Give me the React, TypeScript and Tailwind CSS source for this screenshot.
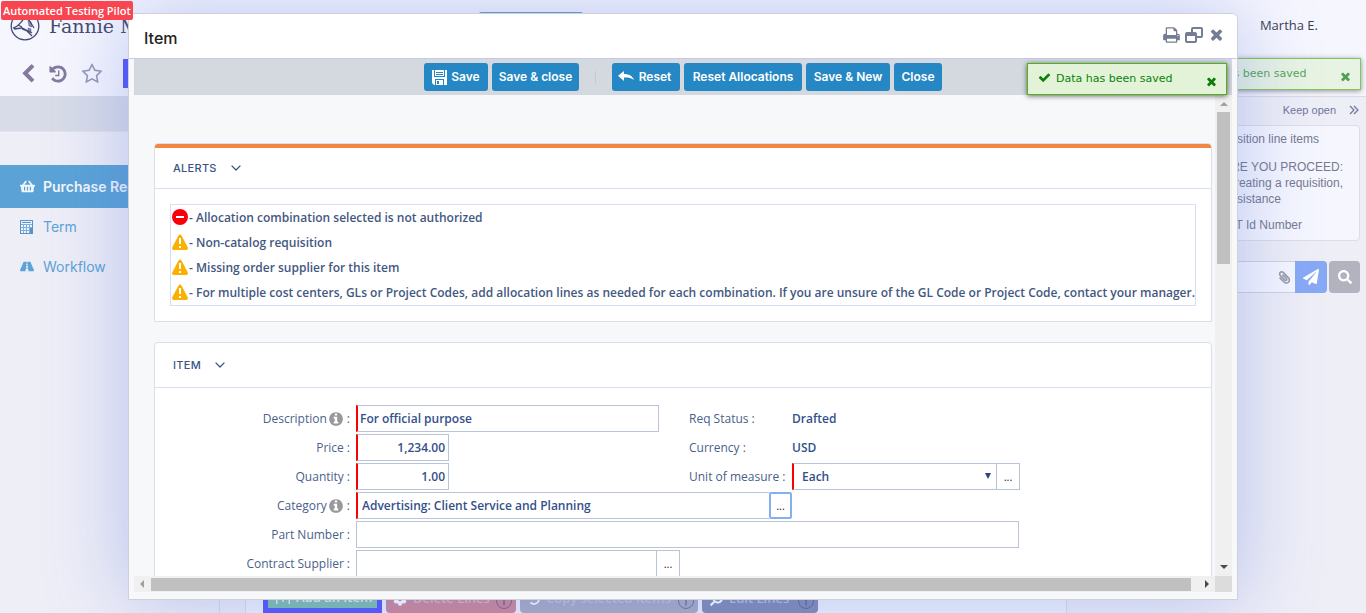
import React from "react";
import { FaPaperPlane, FaPaperclip, FaShoppingBasket, FaRoad, FaCog, FaSearch, FaUndo } from "react-icons/fa";

const PATHS = {
  print:
    "M384 1536h896v-256h-896v256zM384 896h896v-384h-160q-40 0-68-28t-28-68v-160h-640v640zM1536 960q0-26-19-45t-45-19-45 19-19 45 19 45 45 19 45-19 19-45zM1664 960v416q0 13-9.5 22.5t-22.5 9.5h-224v160q0 40-28 68t-68 28h-960q-40 0-68-28t-28-68v-160h-224q-13 0-22.5-9.5t-9.5-22.5v-416q0-79 56.5-135.5t135.5-56.5h64v-544q0-40 28-68t68-28h672q40 0 88 20t76 48l152 152q28 28 48 76t20 88v256h64q79 0 135.5 56.5t56.5 135.5z",
  times:
    "M1490 1322q0 40-28 68l-136 136q-28 28-68 28t-68-28l-294-294-294 294q-28 28-68 28t-68-28l-136-136q-28-28-28-68t28-68l294-294-294-294q-28-28-28-68t28-68l136-136q28-28 68-28t68 28l294 294 294-294q28-28 68-28t68 28l136 136q28 28 28 68t-28 68l-294 294 294 294q28 28 28 68z",
  check:
    "M1671 566q0 40-28 68l-724 724-136 136q-28 28-68 28t-68-28l-136-136-362-362q-28-28-28-68t28-68l136-136q28-28 68-28t68 28l294 295 656-657q28-28 68-28t68 28l136 136q28 28 28 68z",
  back:
    "M1427 301l-531 531 531 531q19 19 19 45t-19 45l-166 166q-19 19-45 19t-45-19l-742-742q-19-19-19-45t19-45l742-742q19-19 45-19t45 19l166 166q19 19 19 45t-19 45z",
  history:
    "M1664 896q0 156-61 298t-164 245-245 164-298 61q-172 0-327-72.5t-264-204.5q-7-10-6.5-22.5t8.5-20.5l137-138q10-9 25-9 16 2 23 12 73 95 179 147t225 52q104 0 198.5-40.5t163.5-109.5 109.5-163.5 40.5-198.5-40.5-198.5-109.5-163.5-163.5-109.5-198.5-40.5q-98 0-188 35.5t-160 101.5l137 138q31 30 14 69-17 40-59 40h-448q-26 0-45-19t-19-45v-448q0-42 40-59 39-17 69 14l130 129q107-101 244.5-156.5t284.5-55.5q156 0 298 61t245 164 164 245 61 298zm-640-288v448q0 14-9 23t-23 9h-320q-14 0-23-9t-9-23v-64q0-14 9-23t23-9h224v-352q0-14 9-23t23-9h64q14 0 23 9t9 23z",
  star:
    "M1201 1004l306-297-422-62-189-382-189 382-422 62 306 297-73 421 378-199 377 199zm527-357q0 22-26 48l-363 354 86 500q1 7 1 20 0 50-41 50-19 0-40-12l-449-236-449 236q-22 12-40 12-21 0-31.5-14.5t-10.5-35.5q0-6 2-20l86-500-364-354q-25-27-25-48 0-37 56-46l502-73 225-455q19-41 49-41t49 41l225 455 502 73q56 9 56 46z",
  info:
    "M1152 1376v-160q0-14-9-23t-23-9h-96v-512q0-14-9-23t-23-9h-320q-14 0-23 9t-9 23v160q0 14 9 23t23 9h96v320h-96q-14 0-23 9t-9 23v160q0 14 9 23t23 9h448q14 0 23-9t9-23zm-128-896v-160q0-14-9-23t-23-9h-192q-14 0-23 9t-9 23v160q0 14 9 23t23 9h192q14 0 23-9t9-23zm640 416q0 209-103 385.5t-279.5 279.5-385.5 103-385.5-103-279.5-279.5-103-385.5 103-385.5 279.5-279.5 385.5-103 385.5 103 279.5 279.5 103 385.5z",
};

function Glyph({ name, className }: { name: keyof typeof PATHS; className: string }) {
  return (
    <svg viewBox="0 0 1792 1792" className={className} fill="currentColor" aria-hidden="true">
      <path d={PATHS[name]} />
    </svg>
  );
}

function Restore() {
  return (
    <svg viewBox="0 0 18 16" className="h-4 w-[18px]" fill="none" stroke="currentColor" strokeWidth="2" aria-hidden="true">
      <path d="M7 5V2q0-1 1-1h8q1 0 1 1v7q0 1-1 1h-4" />
      <rect x="1" y="6" width="10" height="9" rx="1" />
      <path d="M1 7.500h10" strokeWidth="3" />
    </svg>
  );
}

function Floppy() {
  return (
    <svg viewBox="0 0 15 15" className="h-[15px] w-[15px]" aria-hidden="true">
      <path d="M0 0h15v15H2l-2-2z" fill="#fff" />
      <path d="M2 0h1v6h9V0h1v7H2zM4 2h7v1H4zM4 4h7v1H4zM3 9h9v6h-1v-5H4v5H3zM5 11h2v3H5z" fill="#2587c3" />
    </svg>
  );
}

function ReplyArrow() {
  return (
    <svg viewBox="0 0 16 12" className="h-3 w-4" fill="#fff" aria-hidden="true">
      <path d="M6 0v3c5 0 8.500 2 10 6-3-2.200-5.500-2.700-10-2.600V10L0 4.800z" />
    </svg>
  );
}

function Calculator() {
  return (
    <svg viewBox="0 0 13 14" className="h-[14px] w-[13px]" aria-hidden="true">
      <rect x="0.500" y="0.500" width="12" height="13" fill="#eef2fb" stroke="#5b93c8" />
      <path d="M1 4.500h11M1 7.500h11M1 10.500h11M3.500 4v9M6.500 4v9M9.500 4v9" stroke="#7fb0dc" />
      <path d="M2 2h9v1H2zM10 8h2v5h-2z" fill="#5b93c8" />
    </svg>
  );
}

function Logo() {
  return (
    <svg viewBox="0 0 30 30" className="h-[30px] w-[30px]" fill="none" stroke="#454b76" strokeWidth="1.300" aria-hidden="true">
      <circle cx="15" cy="15" r="13.800" />
      <path d="M3 17c5-1 7-5 10-8M4 18l8-1 10 5M12 16l-4-2M12 18l5 2 5 5M19 9l5 8" />
      <path d="M18 9l3 2 1 5-3-1zM18 17l3 1v3l-3-1z" fill="#454b76" fillOpacity="0.600" strokeWidth="0.500" />
    </svg>
  );
}

function Caret() {
  return (
    <svg viewBox="0 0 10 6" className="h-[6px] w-[10px]" fill="none" stroke="#3b5485" strokeWidth="1.300" aria-hidden="true">
      <path d="M0.600 0.600L5 5l4.400-4.400" />
    </svg>
  );
}

function Arrow({ dir, className }: { dir: "up" | "down" | "left" | "right"; className: string }) {
  const d = { up: "M0 6l4-4 4 4z", down: "M0 2l4 4 4-4z", left: "M6 0L2 4l4 4z", right: "M2 0l4 4-4 4z" }[dir];
  return (
    <svg viewBox="0 0 8 8" className={`h-2 w-2 ${className}`} fill="currentColor" aria-hidden="true">
      <path d={d} />
    </svg>
  );
}

function Toast({ className }: { className: string }) {
  return (
    <div
      role="status"
      className={`absolute flex h-8 w-[200px] items-center border border-[#4fb217] bg-[#e3f3d8] pr-2 pl-[10px] font-['DejaVu_Sans'] text-[11px] text-[#0a820a] shadow-[0_1px_5px_rgba(0,0,0,0.6)] ${className}`}
    >
      <Glyph name="check" className="mr-[5px] mb-[3px] h-[13px] w-[13px]" />
      <span className="flex-1 whitespace-nowrap">Data has been saved</span>
      <button type="button" aria-label="Dismiss" className="mt-1 text-[#0b7d0b]">
        <Glyph name="times" className="h-[13px] w-[13px]" />
      </button>
    </div>
  );
}

function Action({ children, icon, className = "" }: { children: React.ReactNode; icon?: React.ReactNode; className?: string }) {
  return (
    <button
      type="button"
      className={`flex h-7 items-center rounded-[3px] bg-[#2587c3] text-xs font-semibold whitespace-nowrap text-white ${className}`}
    >
      {icon}
      <span className="flex-1">{children}</span>
    </button>
  );
}

function Card({ title, accent, className, children }: { title: string; accent?: boolean; className: string; children: React.ReactNode }) {
  return (
    <section className={`overflow-hidden rounded-t border border-[#d8deec] bg-white ${className}`}>
      {accent && <div className="h-1 bg-[#f08743]" />}
      <h2 className={`flex items-center gap-[14px] border-b border-[#d8deec] pl-[18px] font-['Inter'] text-[11px] font-medium tracking-wide text-[#3b5485] ${accent ? "h-[41px]" : "h-[45px]"}`}>
        {title}
        <Caret />
      </h2>
      {children}
    </section>
  );
}

function Warning() {
  return (
    <svg viewBox="0 0 16 16" className="mb-px h-4 w-4 shrink-0" aria-hidden="true">
      <path d="M7 1.500q1-1.500 2 0l6.300 12q.8 2-.8 2h-13q-1.600 0-.8-2z" fill="#f9b000" stroke="#f9b000" strokeLinejoin="round" />
      <path d="M7 4h2v6H7zM7 12h2v2H7z" fill="#fff" />
    </svg>
  );
}

function Stop() {
  return (
    <svg viewBox="0 0 16 16" className="mb-px h-4 w-4 shrink-0" aria-hidden="true">
      <circle cx="8" cy="8" r="8" fill="#fb0007" />
      <path d="M4 7h8v2H4z" fill="#fff" />
    </svg>
  );
}

const ALERTS = [
  "Allocation combination selected is not authorized",
  "Non-catalog requisition",
  "Missing order supplier for this item",
  "For multiple cost centers, GLs or Project Codes, add allocation lines as needed for each combination. If you are unsure of the GL Code or Project Code, contact your manager.",
];

function Label({ htmlFor, text, info }: { htmlFor: string; text: string; info?: boolean }) {
  return (
    <label htmlFor={htmlFor} className="flex w-[195px] shrink-0 items-center justify-end text-[#4a5f8a]">
      {text}
      {info && <Glyph name="info" className="ml-px h-4 w-4 text-[#999]" />}
      <span className="pl-[3px]">:</span>
    </label>
  );
}

const field = "h-[27px] border border-[#b9c5d6] bg-white font-semibold text-[#34508a] outline-none";
const required = "border-l-2 border-l-[#ff0000]";

function More({ label, className }: { label: string; className: string }) {
  return (
    <button type="button" aria-label={label} className={`w-[23px] shrink-0 bg-white text-[11px] leading-none text-[#222] ${className}`}>
      ...
    </button>
  );
}

function LineButton({ icon, text, className }: { icon: React.ReactNode; text: string; className: string }) {
  return (
    <button type="button" className={`flex h-7 items-center gap-[6px] rounded text-[13px] font-semibold whitespace-nowrap ${className}`}>
      {icon}
      <span className="flex-1 text-left">{text}</span>
      <svg viewBox="0 0 16 16" className="mt-1 h-4 w-4" fill="none" stroke="#4b5070" strokeOpacity="0.600" aria-hidden="true">
        <circle cx="8" cy="8" r="7.500" />
        <path d="M8 6.500v6M8 4v1.500" strokeWidth="1.500" />
      </svg>
    </button>
  );
}

export default function App() {
  return (
    <div className="relative flex h-screen flex-col overflow-hidden bg-[#eeeef7] font-['Open_Sans','Noto_Sans',sans-serif] text-[13px]">
      <header className="flex h-24 shrink-0 flex-col bg-[#f6f6fe]">
        <div className="flex items-center pt-[10px] pr-[48px] pl-[10px]">
          <Logo />
          <span className="flex-1 pl-[9px] font-['DejaVu_Serif'] text-[19px] leading-8 text-[#454b70]">Fannie Mae</span>
          <a href="#user" className="text-[13px] text-[#3a3f52]">Martha E.</a>
        </div>
        <div className="flex items-center pt-[17px] pl-[18px] text-[#837a9d]">
          <button type="button" aria-label="Back"><Glyph name="back" className="h-5 w-5" /></button>
          <button type="button" aria-label="History" className="ml-[10px]"><Glyph name="history" className="h-5 w-5" /></button>
          <button type="button" aria-label="Favorite" className="ml-[13px] text-[#9498b8]"><Glyph name="star" className="h-[22px] w-[22px]" /></button>
          <span className="ml-5 h-[29px] w-20 bg-[#5558fa]" />
        </div>
      </header>

      <div className="flex min-h-0 flex-1">
        <div className="flex min-w-0 flex-1 flex-col">
          <div className="h-9 shrink-0 border-b border-[#e4e3ea] bg-[#d8dce8]" />
          <div className="flex min-h-0 flex-1">
            <nav className="w-[220px] shrink-0 border-r border-[#d8dbea] pt-[33px] font-['Inter'] text-[14px] text-[#5ba3d8]">
              <a href="#purchase" className="flex h-[43px] items-center gap-2 bg-[#5ba3d6] pl-5 font-semibold whitespace-nowrap text-[#f2f6fd]">
                <FaShoppingBasket className="h-[15px] w-[15px]" />
                Purchase Requisition
              </a>
              <a href="#term" className="flex h-[37px] items-center gap-[10px] pl-5"><Calculator />Term</a>
              <a href="#workflow" className="flex h-[43px] items-center gap-[9px] pl-5"><FaRoad className="h-[13px] w-[14px]" />Workflow</a>
            </nav>
            <main className="ml-[25px] flex flex-1 items-end gap-1 overflow-hidden border-l border-[#d8dbea] bg-[#f0f3fd] pl-[17px]">
              <button type="button" className="flex h-8 w-[119px] items-center gap-[6px] border-[5px] border-[#5558fa] bg-[#80c0ae] pl-2 text-[13px] leading-5 font-semibold whitespace-nowrap text-[#e3f1f4]">
                <svg viewBox="0 0 14 14" className="h-[14px] w-[14px] shrink-0" fill="none" stroke="currentColor" strokeWidth="1.500" aria-hidden="true">
                  <path d="M0.700 0v14M13.300 0v14M7 3v9M3 7h8" />
                </svg>
                Add an Item
              </button>
              <LineButton icon={<FaCog className="h-[14px] w-[14px] text-white" />} text="Delete Lines" className="w-[130px] bg-[#cf8998] pr-1 pl-[7px] text-[#e3b4c0]" />
              <LineButton icon={<FaUndo className="h-3 w-3 text-white" />} text="Copy selected items" className="w-[178px] bg-[#aaadc4] pr-1 pl-2 text-[#bfc2d6]" />
              <LineButton icon={<FaSearch className="h-[13px] w-[13px] -scale-x-100 text-white" />} text="Edit Lines" className="w-[116px] bg-[#818eb7] pr-1 pl-2 text-[#b7bfd9]" />
            </main>
          </div>
        </div>

        <aside className="w-[300px] shrink-0 border-t border-l border-[#d8dbe8] pr-[6px] font-['Liberation_Sans'] text-xs text-[#777a90]">
          <div className="flex h-7 items-center justify-end gap-[13px] pr-px pb-[2px] text-[11px] text-[#6d7699]">
            <a href="#keep">Keep open</a>
            <svg viewBox="0 0 10 10" className="h-[10px] w-[10px]" fill="none" stroke="currentColor" strokeWidth="1.200" aria-hidden="true">
              <path d="M1 1l4 4-4 4M5 1l4 4-4 4" />
            </svg>
          </div>
          <div className="ml-4 flex h-[116px] flex-col gap-3 rounded border border-[#dcdde9] bg-[#f5f6fe] pt-[5px] pr-4 text-right leading-4">
            <p className="pr-6">Requisition line items</p>
            <p>BEFORE YOU PROCEED:<br />Before creating a requisition,<br /><span className="pr-[62px]">for assistance</span></p>
            <p className="-mt-[2px] pr-[41px]">VAT Id Number</p>
          </div>
          <div className="mt-5 ml-4 flex h-8">
            <div className="flex flex-1 items-center border border-r-0 border-[#cfd2e2] bg-[#f5f6fe]">
              <input aria-label="Message" className="min-w-0 flex-1 bg-transparent px-2 outline-none" />
              <FaPaperclip className="mr-1 h-[13px] w-[13px] -scale-x-100 text-[#999cab]" />
            </div>
            <button type="button" aria-label="Send" className="flex w-8 items-center justify-center rounded-r bg-[#88a9f4] text-white">
              <FaPaperPlane className="h-4 w-4" />
            </button>
            <button type="button" aria-label="Search" className="ml-[2px] flex w-[31px] items-center justify-center rounded bg-[#b2b3bf] text-white">
              <FaSearch className="h-[14px] w-[14px]" />
            </button>
          </div>
        </aside>
      </div>

      <div className="absolute top-3 left-[479px] h-2 w-[104px] rounded-t-[2px] bg-[#5ba3d6]" />
      <div className="absolute top-px left-px z-20 rounded-[2px] bg-[#f8454f] px-[2px] text-[11px] leading-[19px] font-semibold whitespace-nowrap text-white">
        Automated Testing Pilot
      </div>
      <Toast className="top-[58px] right-[5px] opacity-70" />

      <div
        role="dialog"
        aria-label="Item"
        className="absolute inset-x-32 inset-y-[13px] z-10 flex flex-col overflow-hidden rounded-t-md border border-[#cfd1d6] bg-[#f7f8fa] shadow-[0_0_80px_rgba(80,110,220,0.36)]"
      >
        <div className="flex h-[45px] shrink-0 items-center border-b border-[#c6c9ea] bg-white pr-3 pl-[15px]">
          <h1 className="flex-1 pt-1 font-['Inter'] text-[16px] font-medium text-[#222]">Item</h1>
          <div className="flex items-center gap-[5px] pb-[3px] text-[#747d94]">
            <button type="button" aria-label="Print">
              <svg viewBox="0 0 1664 1792" className="h-[18px] w-[17px]" fill="currentColor" aria-hidden="true"><path d={PATHS.print} /></svg>
            </button>
            <button type="button" aria-label="Restore window"><Restore /></button>
            <button type="button" aria-label="Close window"><Glyph name="times" className="h-[17px] w-[17px]" /></button>
          </div>
        </div>

        <div className="flex min-h-0 flex-1 flex-col px-[5px] pb-[7px]">
          <div className="flex h-9 shrink-0 items-center justify-center gap-1 bg-[#d4d8df] font-['Inter']">
            <Action icon={<Floppy />} className="w-16 pr-1 pl-2">Save</Action>
            <Action className="w-[87px]">Save &amp; close</Action>
            <span className="mx-3 h-3 w-px bg-[#c6c8cc]" />
            <Action icon={<ReplyArrow />} className="w-[68px] pr-1 pl-[6px]">Reset</Action>
            <Action className="w-[118px]">Reset Allocations</Action>
            <Action className="w-[84px]">Save &amp; New</Action>
            <Action className="w-12">Close</Action>
          </div>

          <div className="flex min-h-0 flex-1">
            <div className="min-w-0 flex-1 overflow-hidden pt-12 pr-[3px] pl-5">
              <Card title="ALERTS" accent className="mb-5">
                <ul className="mx-[15px] my-[15px] border border-[#d5e0f0] px-px font-semibold whitespace-nowrap text-[#43587f]">
                  {ALERTS.map((text, i) => (
                    <li key={text} className="flex h-[25px] items-center gap-px text-xs">
                      {i === 0 ? <Stop /> : <Warning />}
                      <span>- {text}</span>
                    </li>
                  ))}
                </ul>
              </Card>

              <Card title="ITEM" className="h-[400px]">
                <form className="flex flex-col gap-[2px] pt-[17px] text-xs">
                  <div className="flex gap-[6px]">
                    <Label htmlFor="desc" text="Description" info />
                    <input id="desc" defaultValue="For official purpose" className={`w-[303px] px-[2px] ${field} ${required}`} />
                    <div className="flex items-center pl-6 text-[#4a5f8a]">
                      <span className="w-[103px]">Req Status :</span>
                      <span className="font-semibold text-[#34508a]">Drafted</span>
                    </div>
                  </div>
                  <div className="flex gap-[6px]">
                    <Label htmlFor="price" text="Price" />
                    <div className="w-[303px]">
                      <input id="price" defaultValue="1,234.00" className={`w-[93px] px-[3px] text-right ${field} ${required}`} />
                    </div>
                    <div className="flex items-center pl-6 text-[#4a5f8a]">
                      <span className="w-[103px]">Currency :</span>
                      <span className="font-semibold text-[#34508a]">USD</span>
                    </div>
                  </div>
                  <div className="flex gap-[6px]">
                    <Label htmlFor="qty" text="Quantity" />
                    <div className="w-[303px]">
                      <input id="qty" defaultValue="1.00" className={`w-[93px] px-[3px] text-right ${field} ${required}`} />
                    </div>
                    <div className="flex items-center pl-6 text-[#4a5f8a]">
                      <label htmlFor="uom" className="w-[103px]">Unit of measure :</label>
                      <div className="flex">
                        <span className="relative flex">
                          <select id="uom" defaultValue="Each" className={`w-[205px] appearance-none pl-2 ${field} ${required}`}>
                            <option>Each</option>
                          </select>
                          <svg viewBox="0 0 6 6" className="pointer-events-none absolute top-[10px] right-[6px] h-[6px] w-[6px]" fill="#2b467c" aria-hidden="true">
                            <path d="M0 0h6L3 6z" />
                          </svg>
                        </span>
                        <More label="Choose unit" className="border border-l-0 border-[#b9c5d6]" />
                      </div>
                    </div>
                  </div>
                  <div className="flex gap-[6px]">
                    <Label htmlFor="cat" text="Category" info />
                    <div className="flex">
                      <input id="cat" defaultValue="Advertising: Client Service and Planning" className={`w-[413px] border-r-0 px-1 ${field} ${required}`} />
                      <More label="Choose category" className="rounded-[2px] border-2 border-[#86aef3]" />
                    </div>
                  </div>
                  <div className="flex gap-[6px]">
                    <Label htmlFor="part" text="Part Number" />
                    <input id="part" className={`w-[663px] px-1 ${field}`} />
                  </div>
                  <div className="flex gap-[6px]">
                    <Label htmlFor="supplier" text="Contract Supplier" />
                    <div className="flex">
                      <input id="supplier" className={`w-[301px] px-1 ${field}`} />
                      <More label="Choose supplier" className="border border-l-0 border-[#b9c5d6]" />
                    </div>
                  </div>
                </form>
              </Card>
            </div>
            <div className="flex w-[17px] shrink-0 flex-col items-center bg-[#f0f0f0]">
              <Arrow dir="up" className="mt-[5px] mb-1 shrink-0 text-[#a0a0a0]" />
              <div className="mb-auto h-[152px] w-[13px] bg-[#c0c0c0]" />
              <Arrow dir="down" className="my-[5px] shrink-0 text-[#4a4a4a]" />
            </div>
          </div>
          <div className="flex h-4 shrink-0 items-center bg-[#f0f0f0]">
            <Arrow dir="left" className="mr-[5px] ml-1 shrink-0 text-[#a0a0a0]" />
            <div className="h-[13px] flex-1 bg-[#c0c0c0]" />
            <Arrow dir="right" className="mr-1 ml-3 shrink-0 text-[#4a4a4a]" />
            <span className="h-4 w-[17px] bg-[#dcdcdc]" />
          </div>
        </div>
      </div>
      <Toast className="top-[63px] right-[139px] z-20" />
    </div>
  );
}
